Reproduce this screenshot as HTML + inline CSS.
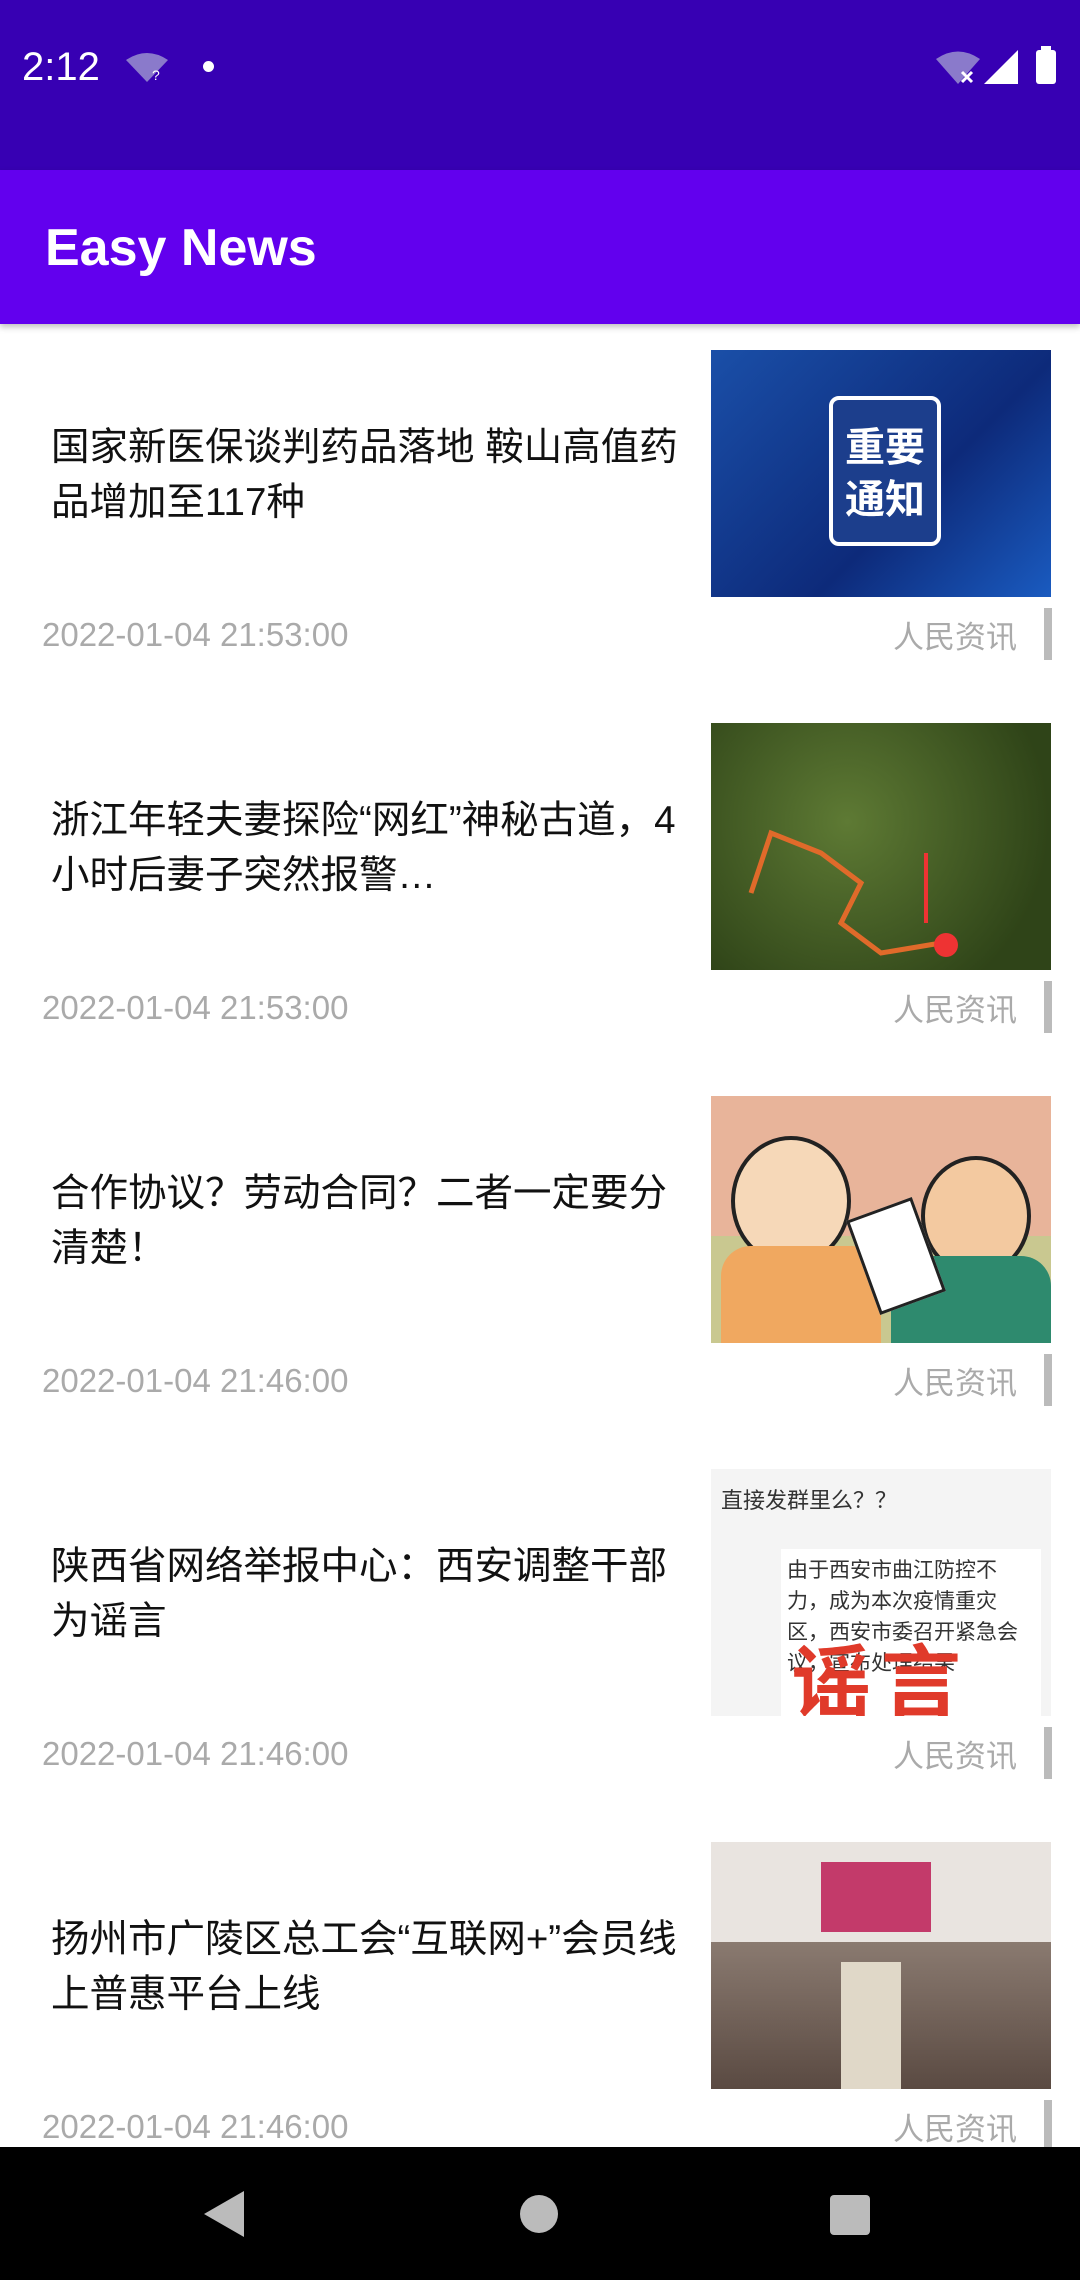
<!DOCTYPE html>
<html><head><meta charset="utf-8"><style>
*{margin:0;padding:0;box-sizing:border-box}
body{width:1080px;height:2280px;overflow:hidden;background:#fff;font-family:"Liberation Sans","Noto Sans CJK SC",sans-serif;position:relative}
.sb{position:absolute;left:0;top:0;width:1080px;height:170px;background:#3700B3;color:#fff}
.ab{position:absolute;left:0;top:170px;width:1080px;height:154px;background:#6200EE;box-shadow:0 3px 6px rgba(0,0,0,.25)}
.ab span{position:absolute;left:45px;top:48px;font-size:52px;color:#fff;font-weight:bold}
.item{position:absolute;left:0;width:1080px;height:373px}
.t{position:absolute;left:51px;top:70px;width:646px;font-size:38.5px;line-height:55px;color:#111}
.d{position:absolute;left:42px;top:266px;font-size:33px;color:#aaa}
.s{position:absolute;left:893px;top:262px;font-size:31px;color:#aaa}
.bar{position:absolute;left:1044px;top:258px;width:8px;height:52px;background:#bbb}
.img{position:absolute;left:711px;top:0;width:340px;height:247px;overflow:hidden}
.nav{position:absolute;left:0;top:2147px;width:1080px;height:133px;background:#000}
</style></head><body>
<div class="sb">
<div style="position:absolute;left:22px;top:45px;font-size:40px">2:12</div>
<svg style="position:absolute;left:126px;top:52px" width="42" height="30"><path d="M0 8 Q21-6 42 8 L21 30Z" fill="#8a7acb"/><text x="26" y="28" font-size="14" fill="#fff">?</text></svg>
<div style="position:absolute;left:203px;top:61px;width:11px;height:11px;border-radius:50%;background:#fff"></div>
<svg style="position:absolute;left:936px;top:50px" width="44" height="34"><path d="M0 9 Q22-6 44 9 L22 34Z" fill="#8a7acb"/><path d="M26 22l10 10M36 22l-10 10" stroke="#fff" stroke-width="3"/></svg>
<svg style="position:absolute;left:984px;top:50px" width="34" height="34"><path d="M34 0V34H0Z" fill="#fff"/></svg>
<div style="position:absolute;left:1036px;top:50px;width:20px;height:34px;background:#fff;border-radius:3px"></div>
<div style="position:absolute;left:1041px;top:46px;width:10px;height:5px;background:#fff"></div>
</div>
<div class="ab"><span>Easy News</span></div>

<div class="item" style="top:350px">
<div class="img" style="background:linear-gradient(135deg,#1a4fa8,#0d2a7a 60%,#1a5bc0)"><div style="position:absolute;left:118px;top:46px;width:112px;height:150px;border:4px solid #fff;border-radius:10px;background:#1c3e8c;color:#fff;font-size:40px;font-weight:bold;text-align:center;line-height:52px;padding-top:22px">重要<br>通知</div></div>
<div class="t">国家新医保谈判药品落地 鞍山高值药品增加至117种</div>
<div class="d">2022-01-04 21:53:00</div><div class="s">人民资讯</div><div class="bar"></div></div>

<div class="item" style="top:723px">
<div class="img" style="background:radial-gradient(circle at 40% 40%,#5e7a34,#2f4418 80%)"><svg width="340" height="247"><path d="M40 170 L60 110 L110 130 L150 160 L130 200 L170 230 L230 220" stroke="#e06a2a" stroke-width="5" fill="none"/><circle cx="235" cy="222" r="12" fill="#e33"/><path d="M215 130V200" stroke="#e33" stroke-width="4"/></svg></div>
<div class="t">浙江年轻夫妻探险“网红”神秘古道，4小时后妻子突然报警…</div>
<div class="d">2022-01-04 21:53:00</div><div class="s">人民资讯</div><div class="bar"></div></div>

<div class="item" style="top:1096px">
<div class="img" style="background:#e8b49a"><div style="position:absolute;left:0;top:140px;width:340px;height:107px;background:#c9c890"></div><div style="position:absolute;left:20px;top:40px;width:120px;height:130px;border-radius:50%;background:#f6d8b8;border:4px solid #222"></div><div style="position:absolute;left:10px;top:150px;width:160px;height:100px;background:#f0a860;border-radius:30px 30px 0 0"></div><div style="position:absolute;left:210px;top:60px;width:110px;height:120px;border-radius:50%;background:#f3c9a0;border:4px solid #222"></div><div style="position:absolute;left:180px;top:160px;width:160px;height:90px;background:#2e8a6e;border-radius:30px 30px 0 0"></div><div style="position:absolute;left:150px;top:110px;width:70px;height:100px;background:#fff;border:3px solid #222;transform:rotate(-20deg)"></div></div>
<div class="t">合作协议？劳动合同？二者一定要分清楚！</div>
<div class="d">2022-01-04 21:46:00</div><div class="s">人民资讯</div><div class="bar"></div></div>

<div class="item" style="top:1469px">
<div class="img" style="background:#f4f4f4"><div style="position:absolute;left:10px;top:14px;font-size:22px;color:#333">直接发群里么？？</div><div style="position:absolute;left:70px;top:80px;width:260px;height:170px;background:#fff;font-size:21px;line-height:31px;color:#333;padding:6px">由于西安市曲江防控不力，成为本次疫情重灾区，西安市委召开紧急会议，宣布处理结果</div><div style="position:absolute;left:80px;top:150px;font-size:80px;font-weight:bold;color:#e03a2a;letter-spacing:10px">谣言</div></div>
<div class="t">陕西省网络举报中心：西安调整干部为谣言</div>
<div class="d">2022-01-04 21:46:00</div><div class="s">人民资讯</div><div class="bar"></div></div>

<div class="item" style="top:1842px">
<div class="img" style="background:#e9e4e0"><div style="position:absolute;left:110px;top:20px;width:110px;height:70px;background:#c33a6a"></div><div style="position:absolute;left:0;top:100px;width:340px;height:147px;background:linear-gradient(#8a7a70,#5a4a42)"></div><div style="position:absolute;left:130px;top:120px;width:60px;height:127px;background:#e0d8c8"></div></div>
<div class="t">扬州市广陵区总工会“互联网+”会员线上普惠平台上线</div>
<div class="d">2022-01-04 21:46:00</div><div class="s">人民资讯</div><div class="bar"></div></div>

<div class="nav">
<svg style="position:absolute;left:204px;top:44px" width="40" height="46"><path d="M40 0V46L0 23Z" fill="#bbb"/></svg>
<div style="position:absolute;left:520px;top:48px;width:38px;height:38px;border-radius:50%;background:#bbb"></div>
<div style="position:absolute;left:830px;top:48px;width:40px;height:40px;border-radius:4px;background:#bbb"></div>
</div>
</body></html>
